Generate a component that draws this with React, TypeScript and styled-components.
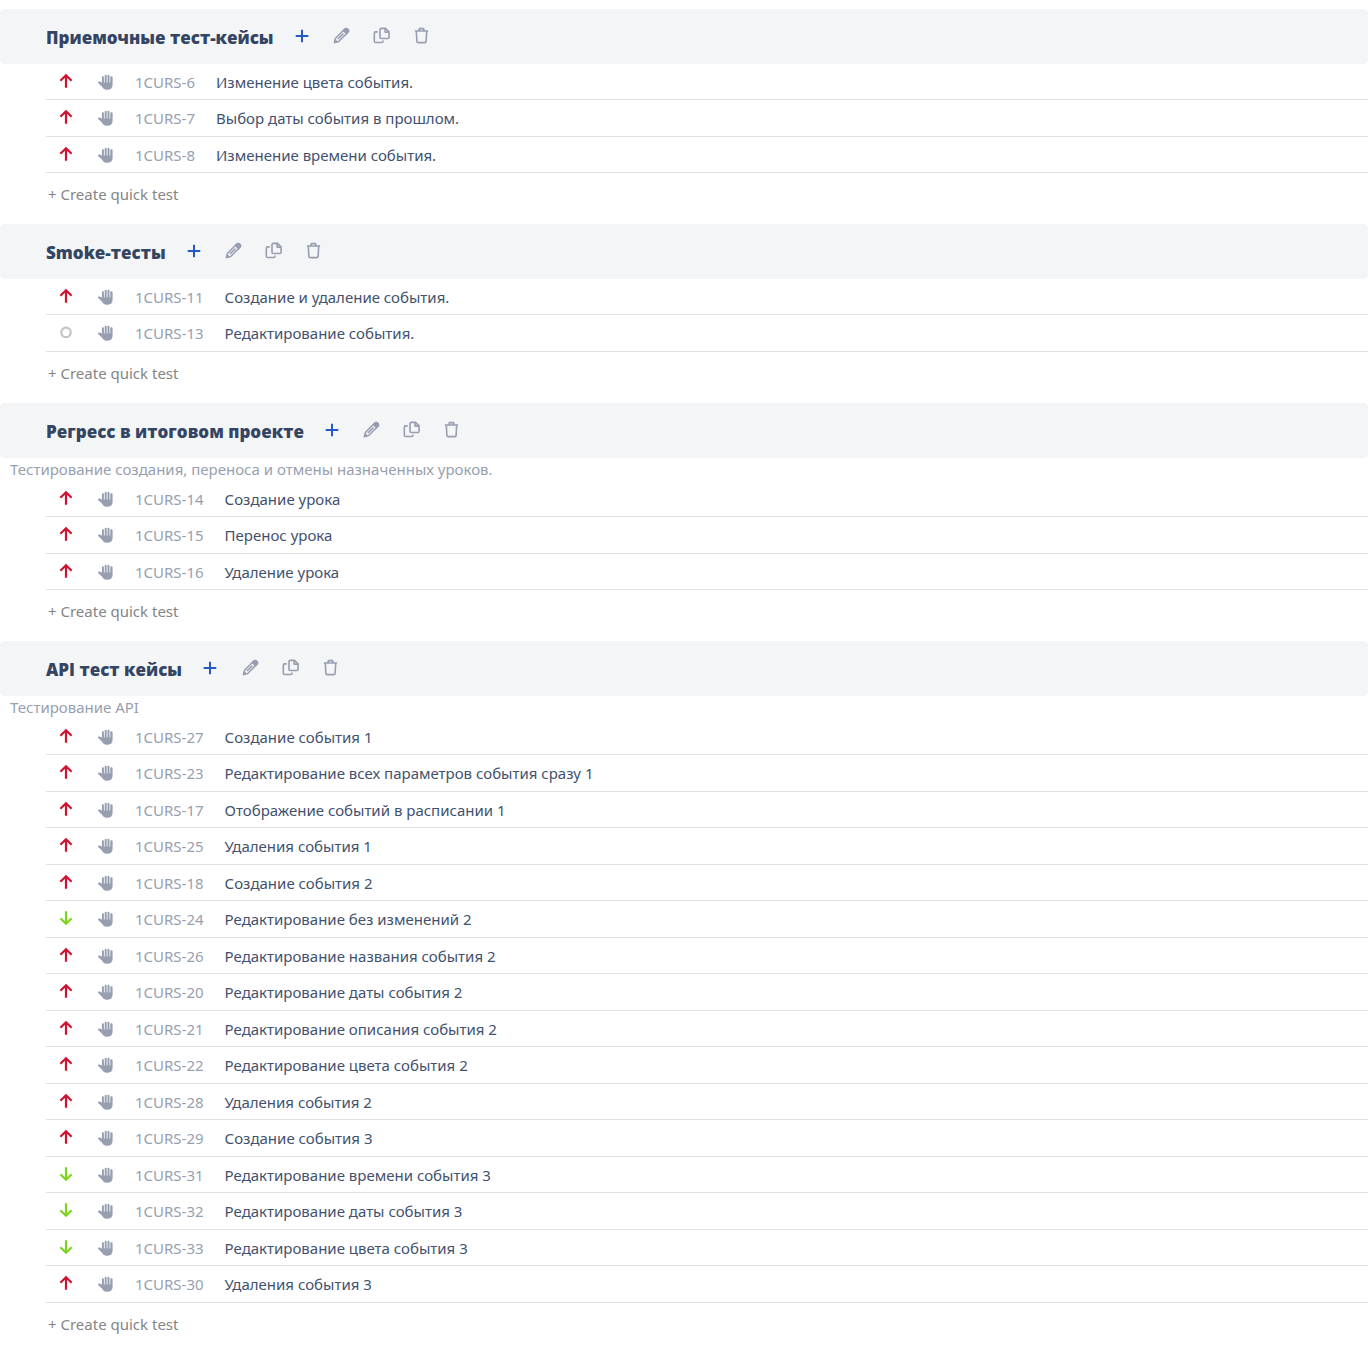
import React from 'react';
import styled, { createGlobalStyle } from 'styled-components';

const GlobalStyle = createGlobalStyle`
  *, *::before, *::after { box-sizing: border-box; }
  body {
    margin: 0;
    background: #fff;
    color: #42526e;
    font-family: 'Noto Sans', 'Open Sans', sans-serif;
    font-size: 15px;
    line-height: 20px;
  }
`;

const Page = styled.main`
  display: flex;
  flex-direction: column;
  gap: 9px;
  padding-top: 9px;
`;

const SuiteHeader = styled.header`
  display: flex;
  align-items: center;
  gap: 8px;
  height: 55px;
  padding-left: 46px;
  background: #f4f5f7;
  border-radius: 5px;
`;

const SuiteTitle = styled.h2`
  margin: 0;
  padding-top: 2px;
  color: #344563;
  font-family: 'Open Sans', 'Noto Sans', sans-serif;
  font-size: 17px;
  font-weight: 800;
  line-height: 24px;
`;

const Actions = styled.div`
  display: flex;
  padding-bottom: 2px;
`;

const IconButton = styled.button<{ $primary?: boolean }>`
  display: grid;
  place-items: center;
  width: 40px;
  height: 32px;
  padding: 0;
  border: 0;
  background: none;
  color: ${(p) => (p.$primary ? '#2458c6' : '#979eb0')};
  cursor: pointer;
`;

const Description = styled.p`
  height: 23px;
  margin: 0;
  padding: 1px 10px 0;
  color: #97a0af;
`;

const TestList = styled.ul`
  margin: 0;
  padding: 0 0 0 46px;
  list-style: none;
`;

const TestRow = styled.li`
  display: flex;
  align-items: center;
  height: 36px;
  border-bottom: 1px solid #dfe1e6;

  &:nth-child(even) {
    height: 37px;
  }
`;

const IconCell = styled.span`
  display: grid;
  flex: 0 0 40px;
  place-items: center;
  padding-bottom: 2px;
`;

const TestKey = styled.span`
  margin: 0 21px 0 9px;
  color: #97a0af;
`;

const TestLink = styled.a`
  color: #42526e;
  text-decoration: none;
`;

const CreateBar = styled.div`
  display: flex;
  align-items: center;
  height: 42px;
  padding-left: 48px;
`;

const CreateButton = styled.button`
  padding: 0;
  border: 0;
  background: none;
  color: #858585;
  font: inherit;
  cursor: pointer;
`;

type Priority = 'high' | 'low' | 'none';

const PriorityIcon = ({ level }: { level: Priority }) => {
  if (level === 'none') {
    return (
      <svg width="16" height="16" viewBox="0 0 16 16" fill="none" role="img" aria-label="No priority">
        <circle cx="8" cy="8.4" r="4.7" stroke="#c3c3c3" strokeWidth="2.2" />
      </svg>
    );
  }
  const up = level === 'high';
  return (
    <svg
      width="16"
      height="16"
      viewBox="0 0 16 16"
      fill="none"
      stroke={up ? '#cf1230' : '#7ed321'}
      strokeWidth="2.2"
      role="img"
      aria-label={up ? 'High priority' : 'Low priority'}
    >
      <path d={up ? 'M8 14.8V2.4M2.4 7.7 8 2.3l5.6 5.4' : 'M8 1.2v12.4M2.4 8.3 8 13.7l5.6-5.4'} />
    </svg>
  );
};

const HandIcon = () => (
  <svg width="16" height="18" viewBox="0 -2 16 18" role="img" aria-label="Manual test">
    <path
      fill="#979eb0"
      d="M3.9 12.4.4 9.3C-.5 8.2.6 7 1.9 7.5l2 1.3V3.2c0-1.4 2-1.4 2 0V8.6h.8V1.8c0-1.4 2-1.4 2 0V8.6h.8V1.9c0-1.4 2-1.4 2 0V8.6h.8V3.2c0-1.4 2.3-1.4 2.3 0v7.6c0 3.2-1.9 4.9-4.7 4.9H8.8c-2.2 0-3.6-1.1-4.9-3.3z"
    />
  </svg>
);

const PlusIcon = () => (
  <svg width="18" height="18" viewBox="0 0 18 18" fill="none" stroke="currentColor" strokeWidth="2" aria-hidden="true">
    <path d="M9 2.7v12.6M2.7 9h12.6" />
  </svg>
);

const PencilIcon = () => (
  <svg width="17" height="17" viewBox="0 0 18 18" fill="none" stroke="currentColor" strokeWidth="1.6" strokeLinejoin="round" aria-hidden="true">
    <path d="M1.6 16.4 2.7 12 12.5 2.2c1.9-1.9 5.2 1.2 3.3 3.3L6 15.3z" />
    <path d="M5.2 12.8 11 7" />
    <path fill="currentColor" d="m11 3.7 1.5-1.5c1.9-1.9 5.2 1.2 3.3 3.3L14.3 7zM1.6 16.4l.7-2.5 1.8 1.8z" />
  </svg>
);

const CopyIcon = () => (
  <svg width="17" height="17" viewBox="0 0 18 18" fill="none" stroke="currentColor" strokeWidth="1.7" strokeLinejoin="round" aria-hidden="true">
    <path d="M8.8 1.4h4.4l3.8 3.8v5.6a1.4 1.4 0 0 1-1.4 1.4H8.8a1.4 1.4 0 0 1-1.4-1.4v-8a1.4 1.4 0 0 1 1.4-1.4z" />
    <path d="M12.8 1.6v3.8h4M5 5.2H2.8A1.4 1.4 0 0 0 1.4 6.6v8.4a1.4 1.4 0 0 0 1.4 1.4h6.4a1.4 1.4 0 0 0 1.4-1.4v-.6" />
  </svg>
);

const TrashIcon = () => (
  <svg width="17" height="17" viewBox="0 0 18 18" fill="none" stroke="currentColor" strokeWidth="1.7" strokeLinejoin="round" aria-hidden="true">
    <path d="M2 4.2h14M6.2 4l.6-2.3h4.4l.6 2.3M3.5 4.2l.6 11c.1.8.6 1.3 1.4 1.3h7c.8 0 1.3-.5 1.4-1.3l.6-11" />
  </svg>
);

interface TestCase {
  id: number;
  name: string;
  priority?: Priority;
}

interface Suite {
  title: string;
  description?: string;
  tests: TestCase[];
}

const suites: Suite[] = [
  {
    title: 'Приемочные тест-кейсы',
    tests: [
      { id: 6, name: 'Изменение цвета события.' },
      { id: 7, name: 'Выбор даты события в прошлом.' },
      { id: 8, name: 'Изменение времени события.' },
    ],
  },
  {
    title: 'Smoke-тесты',
    tests: [
      { id: 11, name: 'Создание и удаление события.' },
      { id: 13, name: 'Редактирование события.', priority: 'none' },
    ],
  },
  {
    title: 'Регресс в итоговом проекте',
    description: 'Тестирование создания, переноса и отмены назначенных уроков.',
    tests: [
      { id: 14, name: 'Создание урока' },
      { id: 15, name: 'Перенос урока' },
      { id: 16, name: 'Удаление урока' },
    ],
  },
  {
    title: 'API тест кейсы',
    description: 'Тестирование API',
    tests: [
      { id: 27, name: 'Создание события 1' },
      { id: 23, name: 'Редактирование всех параметров события сразу 1' },
      { id: 17, name: 'Отображение событий в расписании 1' },
      { id: 25, name: 'Удаления события 1' },
      { id: 18, name: 'Создание события 2' },
      { id: 24, name: 'Редактирование без изменений 2', priority: 'low' },
      { id: 26, name: 'Редактирование названия события 2' },
      { id: 20, name: 'Редактирование даты события 2' },
      { id: 21, name: 'Редактирование описания события 2' },
      { id: 22, name: 'Редактирование цвета события 2' },
      { id: 28, name: 'Удаления события 2' },
      { id: 29, name: 'Создание события 3' },
      { id: 31, name: 'Редактирование времени события 3', priority: 'low' },
      { id: 32, name: 'Редактирование даты события 3', priority: 'low' },
      { id: 33, name: 'Редактирование цвета события 3', priority: 'low' },
      { id: 30, name: 'Удаления события 3' },
    ],
  },
];

const SuiteSection = ({ suite }: { suite: Suite }) => (
  <section>
    <SuiteHeader>
      <SuiteTitle>{suite.title}</SuiteTitle>
      <Actions>
        <IconButton type="button" $primary aria-label="Add">
          <PlusIcon />
        </IconButton>
        <IconButton type="button" aria-label="Edit">
          <PencilIcon />
        </IconButton>
        <IconButton type="button" aria-label="Copy">
          <CopyIcon />
        </IconButton>
        <IconButton type="button" aria-label="Delete">
          <TrashIcon />
        </IconButton>
      </Actions>
    </SuiteHeader>
    {suite.description && <Description>{suite.description}</Description>}
    <TestList>
      {suite.tests.map((test) => (
        <TestRow key={test.id}>
          <IconCell>
            <PriorityIcon level={test.priority ?? 'high'} />
          </IconCell>
          <IconCell>
            <HandIcon />
          </IconCell>
          <TestKey>1CURS-{test.id}</TestKey>
          <TestLink href={`#1CURS-${test.id}`}>{test.name}</TestLink>
        </TestRow>
      ))}
    </TestList>
    <CreateBar>
      <CreateButton type="button">+ Create quick test</CreateButton>
    </CreateBar>
  </section>
);

export default function App() {
  return (
    <>
      <GlobalStyle />
      <Page>
        {suites.map((suite) => (
          <SuiteSection key={suite.title} suite={suite} />
        ))}
      </Page>
    </>
  );
}
